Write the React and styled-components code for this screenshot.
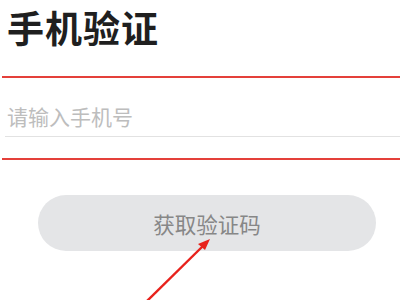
import React from "react";
import styled, { createGlobalStyle } from "styled-components";

const Global = createGlobalStyle`
  html, body { margin: 0; padding: 0; background: #fff; }
  body { font-family: "Noto Sans CJK SC", "Noto Sans", sans-serif; }
`;

const Page = styled.div`
  position: relative;
  width: 400px;
  height: 300px;
  overflow: hidden;
  padding-left: 2px;
  box-sizing: border-box;
`;

const Title = styled.h1`
  margin: 9px 0 30px 5px;
  font-size: 37px;
  line-height: 37px;
  font-weight: 700;
  color: #1f1f1f;
  letter-spacing: 1px;
`;

const RedRule = styled.div`
  height: 2px;
  background: #e4403a;
`;

const InputRow = styled.div`
  padding: 28px 0 21px 3px;
`;

const Input = styled.input`
  display: block;
  width: 100%;
  box-sizing: border-box;
  border: none;
  outline: none;
  padding: 0 0 10px 2px;
  margin: 0;
  font-family: inherit;
  font-size: 21px;
  line-height: 21px;
  height: 31px;
  color: #333;
  background: transparent;
  border-bottom: 1px solid #e2e2e2;
  &::placeholder { color: #bdbdbd; }
`;

const Button = styled.button`
  display: flex;
  align-items: center;
  justify-content: center;
  margin: 35px 0 0 36px;
  width: 338px;
  height: 56px;
  border: none;
  border-radius: 28px;
  background: #e4e5e7;
  color: #878787;
  font-family: inherit;
  font-size: 21.5px;
  padding: 0;
`;

const Arrow = styled.svg`
  position: absolute;
  left: 0;
  top: 0;
  pointer-events: none;
`;

export default function App() {
  return (
    <Page>
      <Global />
      <Title>手机验证</Title>
      <RedRule />
      <InputRow>
        <Input placeholder="请输入手机号" />
      </InputRow>
      <RedRule />
      <Button>获取验证码</Button>
      <Arrow width="400" height="300" viewBox="0 0 400 300">
        <line x1="146" y1="302" x2="204" y2="245" stroke="#e8221c" strokeWidth="2.4" />
        <polygon points="210,239 198,244 205,250" fill="#e8221c" />
      </Arrow>
    </Page>
  );
}
